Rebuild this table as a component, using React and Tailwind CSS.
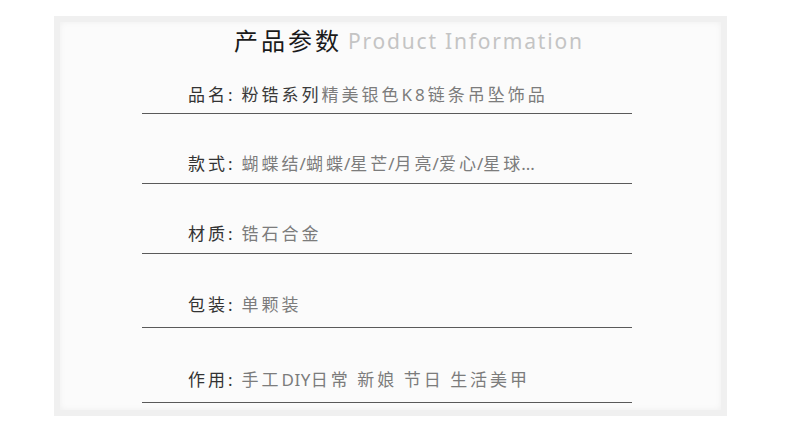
import React from "react";

// each value is split into runs so punctuation and latin get tighter spacing like the original
const tight = "tracking-[1px]";
const slash = { t: "/", c: "tracking-[0px]" };

const rows = [
  {
    label: "品名:",
    value: [
      { t: "粉锆系列", c: "text-[#3a3a3a]" },
      { t: "精美银色K8链条吊坠饰品", c: "text-[#7c7c7c]" },
    ],
    h: "h-[55px]",
    pb: "pb-[6px]",
  },
  {
    label: "款式:",
    value: [
      { t: "蝴蝶", c: "" },
      { t: "结", c: tight },
      slash,
      { t: "蝴", c: "" },
      { t: "蝶", c: tight },
      slash,
      { t: "星", c: "" },
      { t: "芒", c: tight },
      slash,
      { t: "月", c: "" },
      { t: "亮", c: tight },
      slash,
      { t: "爱", c: "" },
      { t: "心", c: tight },
      slash,
      { t: "星", c: "" },
      { t: "球", c: tight },
      { t: "...", c: "tracking-[0px]" },
    ],
    h: "h-[70px]",
    pb: "pb-[7px]",
  },
  { label: "材质:", value: [{ t: "锆石合金", c: "" }], h: "h-[70px]", pb: "pb-[7px]" },
  { label: "包装:", value: [{ t: "单颗装", c: "" }], h: "h-[74px]", pb: "pb-[10px]" },
  {
    label: "作用:",
    value: [
      { t: "手工", c: "" },
      { t: "DIY", c: "tracking-[0.5px]" },
      { t: "日常", c: "" },
      { t: " ", c: "tracking-[2px]" },
      { t: "新娘", c: "" },
      { t: " ", c: "tracking-[2px]" },
      { t: "节日", c: "" },
      { t: " ", c: "tracking-[2px]" },
      { t: "生活美甲", c: "" },
    ],
    h: "h-[75px]",
    pb: "pb-[10px]",
  },
];

const App = () => {
  return (
    <div
      className="w-[790px] h-[430px] bg-white pt-[16px] pl-[54px]"
      style={{ fontFamily: '"Noto Sans", "Noto Sans CJK SC", sans-serif' }}
    >
      <div className="w-[673px] h-[400px] border-[6px] border-[#f0f0f0] bg-[#fbfbfb] shadow-[inset_0_0_6px_rgba(0,0,0,0.05)]">
        {/* title */}
        <div className="h-[37px] flex items-center pl-[174px]">
          <span className="text-[24px] leading-[30px] tracking-[3px] text-[#1a1a1a]">产品参数</span>
          <span className="ml-[6px] text-[21px] leading-[30px] tracking-[1.8px] text-[#c4c4c4]">
            Product Information
          </span>
        </div>

        {rows.map((row) => (
          <div
            key={row.label}
            className={`${row.h} ${row.pb} ml-[82px] w-[490px] flex items-end border-b border-[#5a5a5a] pl-[46px]`}
          >
            <p className="text-[17px] leading-[24px] tracking-[3px] whitespace-pre text-[#7c7c7c]">
              <span className="text-[#333]">{row.label}</span>
              <span className="ml-[6px]">
                {row.value.map((seg, i) => (
                  <span key={i} className={seg.c}>
                    {seg.t}
                  </span>
                ))}
              </span>
            </p>
          </div>
        ))}
      </div>
    </div>
  );
};

export default App;
